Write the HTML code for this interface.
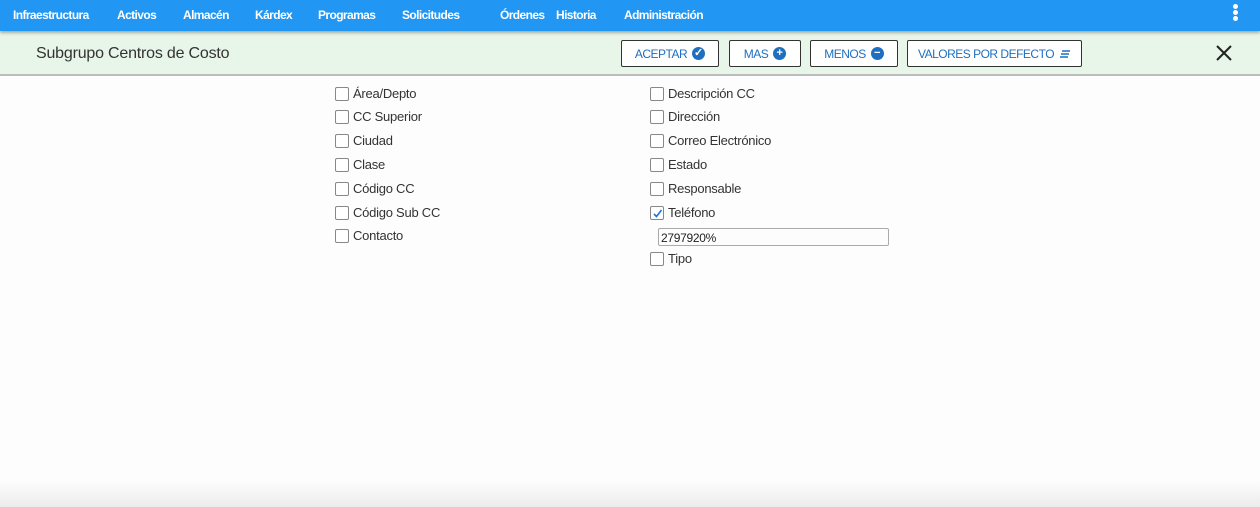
<!DOCTYPE html>
<html><head><meta charset="utf-8"><style>
*{box-sizing:border-box;margin:0;padding:0}
body{width:1260px;height:507px;background:#fdfdfd;font-family:"Liberation Sans",sans-serif;position:relative;overflow:hidden}
.nav{position:absolute;left:0;top:0;width:1260px;height:31px;background:#2196f3;box-shadow:0 2px 3px rgba(0,0,0,.3);z-index:2}
.nav span{position:absolute;top:8px;color:#fff;font-size:12px;font-weight:bold;letter-spacing:-0.6px}
.dots{position:absolute;left:1233px;top:4px;width:5px}
.dots i{display:block;width:5px;height:5px;border-radius:50%;background:#fff;margin-bottom:1px}
.bar{position:absolute;left:0;top:31px;width:1260px;height:45px;background:#e8f5e9;border-bottom:2px solid #bdbdbd}
.title{position:absolute;left:36px;top:14px;font-size:16px;color:#333;letter-spacing:-0.2px}
.btn{position:absolute;top:9px;height:27px;border:1px solid #333;border-radius:2px;background:#fff;color:#1e6fbf;font-size:12px;display:flex;align-items:center;justify-content:center;gap:5px;letter-spacing:-0.5px}
.ic{width:13px;height:13px;border-radius:50%;background:#1e6fbf;color:#fff;font-size:11px;font-weight:bold;display:flex;align-items:center;justify-content:center;line-height:1;letter-spacing:0}
.x{position:absolute;left:1214px;top:12px}
.cb{position:absolute;font-size:13px;color:#333;display:flex;align-items:center;letter-spacing:-0.25px}
.cb b{display:inline-block;width:14px;height:14px;border:1px solid #888;border-radius:2px;margin-right:4px;background:#fff;position:relative}
.inp{position:absolute;left:658px;top:228px;width:231px;height:18px;border:1px solid #aaa;border-radius:2px;font-size:12px;color:#222;padding:2px 0 0 2px;letter-spacing:-0.3px}
.shadow{position:absolute;left:0;top:480px;width:1260px;height:27px;background:linear-gradient(#fdfdfd,#ececec)}
</style></head><body>
<div class="nav">
<span style="left:13px">Infraestructura</span><span style="left:117px">Activos</span><span style="left:183px">Almacén</span><span style="left:255px">Kárdex</span><span style="left:318px">Programas</span><span style="left:402px">Solicitudes</span><span style="left:500px">Órdenes</span><span style="left:556px">Historia</span><span style="left:624px">Administración</span>
<div class="dots"><i></i><i></i><i></i></div>
</div>
<div class="bar">
<div class="title">Subgrupo Centros de Costo</div>
<div class="btn" style="left:621px;width:98px">ACEPTAR <span class="ic">✓</span></div>
<div class="btn" style="left:729px;width:72px">MAS <span class="ic">+</span></div>
<div class="btn" style="left:810px;width:88px">MENOS <span class="ic">−</span></div>
<div class="btn" style="left:907px;width:175px">VALORES POR DEFECTO <svg width="12" height="10" viewBox="0 0 12 10"><path d="M3 2h8M2 5h8M1 8h8" stroke="#1e6fbf" stroke-width="1.4"/></svg></div>
<svg class="x" width="20" height="20" viewBox="0 0 20 20"><path d="M3 3L17 17M17 3L3 17" stroke="#222" stroke-width="2"/></svg>
</div>
<div class="cb" style="left:335px;top:86px"><b></b>Área/Depto</div>
<div class="cb" style="left:335px;top:109px"><b></b>CC Superior</div>
<div class="cb" style="left:335px;top:133px"><b></b>Ciudad</div>
<div class="cb" style="left:335px;top:157px"><b></b>Clase</div>
<div class="cb" style="left:335px;top:181px"><b></b>Código CC</div>
<div class="cb" style="left:335px;top:205px"><b></b>Código Sub CC</div>
<div class="cb" style="left:335px;top:228px"><b></b>Contacto</div>
<div class="cb" style="left:650px;top:86px"><b></b>Descripción CC</div>
<div class="cb" style="left:650px;top:109px"><b></b>Dirección</div>
<div class="cb" style="left:650px;top:133px"><b></b>Correo Electrónico</div>
<div class="cb" style="left:650px;top:157px"><b></b>Estado</div>
<div class="cb" style="left:650px;top:181px"><b></b>Responsable</div>
<div class="cb" style="left:650px;top:205px"><b><svg style="position:absolute;left:1px;top:1px" width="11" height="11" viewBox="0 0 11 11"><path d="M2 6l2.5 2.5L9.5 2" stroke="#1e73d8" stroke-width="1.6" fill="none"/></svg></b>Teléfono</div>
<div class="inp">2797920%</div>
<div class="cb" style="left:650px;top:251px"><b></b>Tipo</div>
<div class="shadow"></div>
</body></html>
